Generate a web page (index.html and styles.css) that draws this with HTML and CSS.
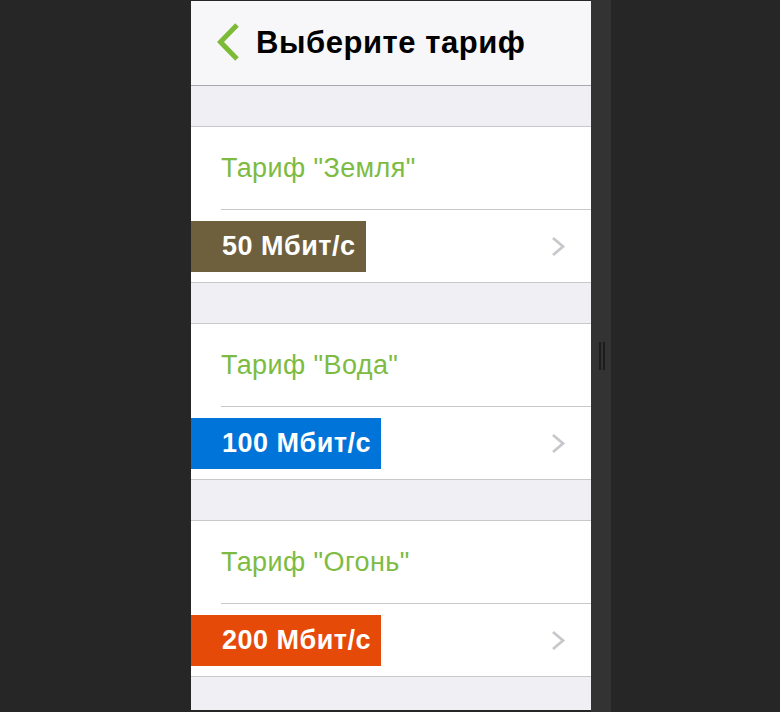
FILE: index.html
```html
<!DOCTYPE html>
<html lang="ru">
<head>
<meta charset="utf-8">
<title>Выберите тариф</title>
<link rel="stylesheet" href="styles.css">
</head>
<body>
<div class="stage">
  <div class="gutter"></div>
  <main class="phone">
    <header class="nav">
      <svg class="back" width="26" height="40" viewBox="0 0 26 40"><path d="M22 3 L5.5 20 L22 37" fill="none" stroke="#7dbb36" stroke-width="5"/></svg>
      <h1 class="nav-title">Выберите тариф</h1>
    </header>
    <div class="band"></div>
    <section class="card">
      <div class="card-title">Тариф "Земля"</div>
      <div class="card-row">
        <span class="badge badge-earth">50 Мбит/с</span>
        <svg class="chev" width="16" height="21" viewBox="0 0 16 21"><path d="M3 2 L13 10.5 L3 19" fill="none" stroke="#c7c7cc" stroke-width="2.8"/></svg>
      </div>
    </section>
    <div class="band"></div>
    <section class="card">
      <div class="card-title">Тариф "Вода"</div>
      <div class="card-row">
        <span class="badge badge-water">100 Мбит/с</span>
        <svg class="chev" width="16" height="21" viewBox="0 0 16 21"><path d="M3 2 L13 10.5 L3 19" fill="none" stroke="#c7c7cc" stroke-width="2.8"/></svg>
      </div>
    </section>
    <div class="band"></div>
    <section class="card">
      <div class="card-title">Тариф "Огонь"</div>
      <div class="card-row">
        <span class="badge badge-fire">200 Мбит/с</span>
        <svg class="chev" width="16" height="21" viewBox="0 0 16 21"><path d="M3 2 L13 10.5 L3 19" fill="none" stroke="#c7c7cc" stroke-width="2.8"/></svg>
      </div>
    </section>
    <div class="band band-last"></div>
  </main>
  <div class="side">
    <div class="grip"><span></span><span></span></div>
  </div>
</div>
</body>
</html>
```

FILE: styles.css
```css
html, body {
  margin: 0;
  padding: 0;
  background: #262626;
  height: 100%;
  overflow: hidden;
}
.stage {
  display: flex;
  height: 712px;
  font-family: "Liberation Sans", Arial, sans-serif;
}
.gutter {
  width: 191px;
  flex: none;
}
.phone {
  width: 400px;
  flex: none;
  margin: 1px 0 2px;
  background: #efeff4;
  display: flex;
  flex-direction: column;
  overflow: hidden;
}
.side {
  width: 20px;
  flex: none;
  background: #333333;
  display: flex;
  align-items: center;
  justify-content: center;
}
.grip {
  display: flex;
  gap: 2px;
  height: 28px;
  margin-left: 2px;
}
.grip span {
  width: 2px;
  background: #1c1c1c;
}
.nav {
  height: 84px;
  background: #f7f7f9;
  border-bottom: 1px solid #a9a9ad;
  display: flex;
  align-items: center;
  padding-left: 24px;
  gap: 15px;
  box-sizing: content-box;
}
.back {
  flex: none;
  margin-top: -2px;
}
.nav-title {
  margin: 0;
  font-size: 31px;
  font-weight: bold;
  color: #000;
  letter-spacing: 0.55px;
}
.band {
  height: 40px;
  flex: none;
}
.band-last {
  flex: 1;
}
.card {
  background: #fff;
  border-top: 1px solid #c8c7cc;
  border-bottom: 1px solid #c8c7cc;
  flex: none;
}
.card-title {
  height: 82px;
  margin-left: 30px;
  border-bottom: 1px solid #c8c7cc;
  display: flex;
  align-items: center;
  font-size: 27px;
  letter-spacing: 0.4px;
  color: #7dbb42;
}
.card-row {
  height: 72px;
  display: flex;
  align-items: center;
  justify-content: space-between;
  padding-right: 25px;
}
.badge {
  height: 51px;
  display: flex;
  align-items: center;
  padding: 0 10px 0 31px;
  font-size: 27px;
  font-weight: bold;
  letter-spacing: 0.5px;
  color: #fff;
}
.badge-earth { background: #6e5f3d; }
.badge-water { background: #0074d9; }
.badge-fire { background: #e64a08; }
.chev {
  flex: none;
}
```
